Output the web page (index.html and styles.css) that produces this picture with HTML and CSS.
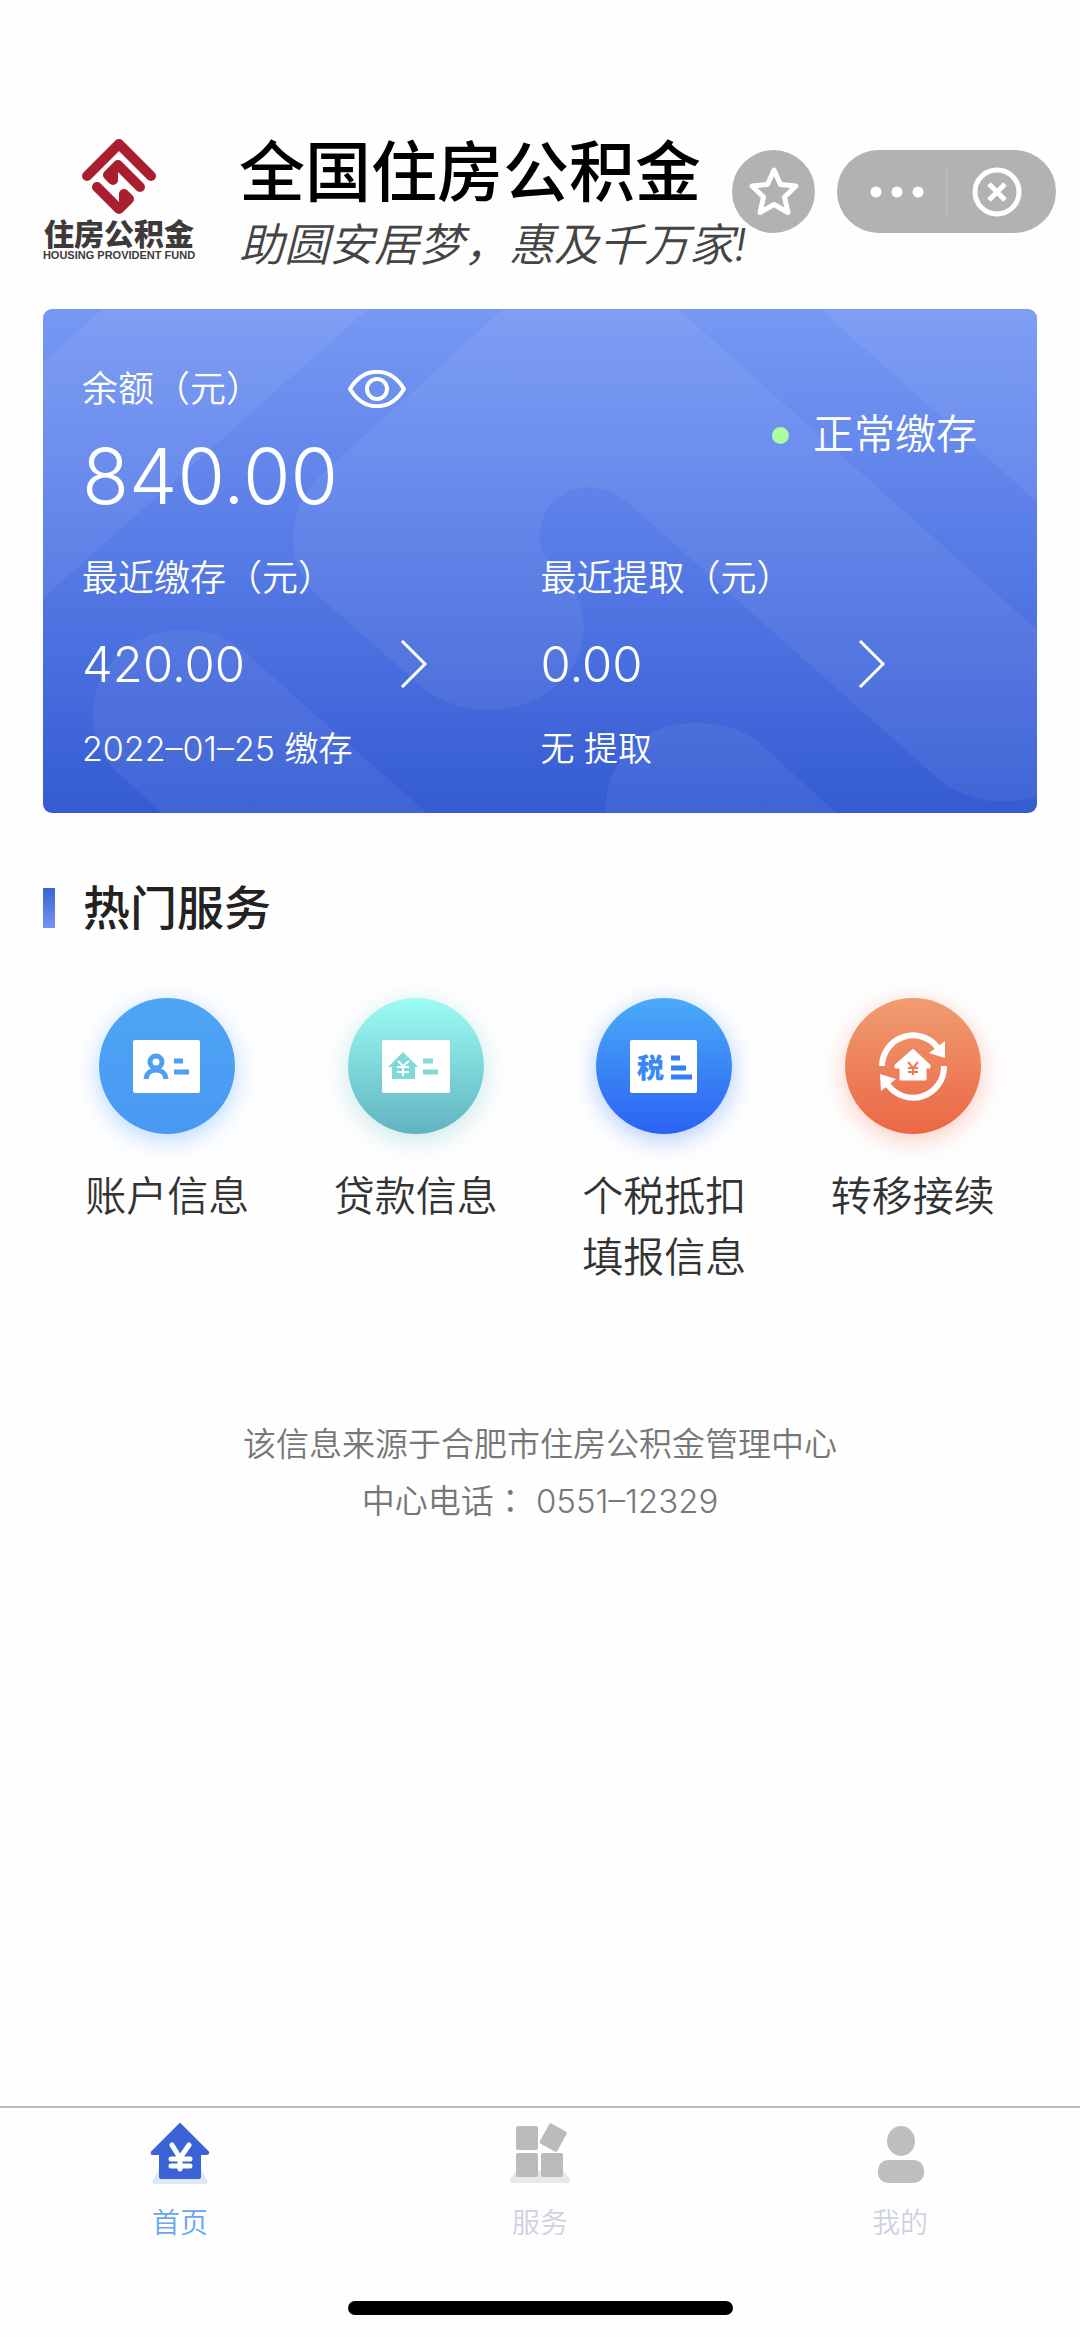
FILE: index.html
```
<!DOCTYPE html>
<html lang="zh-CN">
<head>
    <meta charset="UTF-8">
    <meta name="viewport" content="width=device-width, initial-scale=1.0">
    <title>全国住房公积金</title>
    <link rel="stylesheet" href="styles.css">
</head>
<body>
    <header class="header">
        <div class="logo">
            <svg class="logo-mark" viewBox="0 0 76 78" fill="none" stroke="#a91f30" stroke-width="10" stroke-linecap="round" stroke-linejoin="round">
                <path d="M6 38 L38 6 L70 38"/>
                <path d="M59 49 L37 27 L27 37 L32 42 V35"/>
                <path d="M16 49 L38 71 L48 61 L43 56 V63"/>
            </svg>
            <span class="logo-name">住房公积金</span>
            <span class="logo-en">HOUSING PROVIDENT FUND</span>
        </div>
        <div class="brand">
            <h1 class="brand-title">全国住房公积金</h1>
            <p class="brand-slogan">助圆安居梦，惠及千万家!</p>
        </div>
        <div class="capsule-area">
            <button class="star-btn" type="button" aria-label="收藏">
                <svg viewBox="0 0 52 52" width="52" height="52" fill="none" stroke="#fff" stroke-width="5" stroke-linejoin="round">
                    <path d="M26 4 L32.500 18.500 L48 20 L36.500 31 L40 46.500 L26 38.500 L12 46.500 L15.500 31 L4 20 L19.500 18.500 Z"/>
                </svg>
            </button>
            <div class="capsule">
                <button class="capsule-btn" type="button" aria-label="更多">
                    <svg viewBox="0 0 54 12" width="54" height="12" fill="#fff">
                        <circle cx="6" cy="6" r="5.500"/>
                        <circle cx="27" cy="6" r="5.500"/>
                        <circle cx="48" cy="6" r="5.500"/>
                    </svg>
                </button>
                <span class="capsule-line"></span>
                <button class="capsule-btn" type="button" aria-label="关闭">
                    <svg viewBox="0 0 50 50" width="50" height="50" fill="none" stroke="#fff" stroke-width="5">
                        <circle cx="25" cy="25" r="22"/>
                        <path d="M17 17 L33 33 M33 17 L17 33"/>
                    </svg>
                </button>
            </div>
        </div>
    </header>

    <main class="main">
        <section class="card">
            <svg class="card-bg" viewBox="0 0 994 504" preserveAspectRatio="none" fill="#fff" fill-opacity="0.06">
                <path d="M60 0 H325 L0 289 V54 Z"/>
                <path d="M460 0 H635 L994 321 V487 Q945 503 900 474 L584 193 C560 174 531 174 511 192 C495 208 492 232 503 249 C548 281 552 338 519 372 C478 411 411 411 370 370 L274 286 C242 256 242 204 274 170 Z"/>
                <path d="M777 0 H994 V193 Z"/>
                <path d="M119 504 L76 465 C40 431 42 377 76 345 C108 315 160 313 196 338 L384 504 Z"/>
                <path d="M562 504 C562 450 602 414 650 414 C676 414 698 419 715 433 L794 504 Z"/>
            </svg>
            <div class="card-top">
                <div class="balance">
                    <div class="balance-label">
                        <span class="label">余额（元）</span>
                        <button class="eye-btn" type="button" aria-label="显示余额">
                            <svg viewBox="0 0 60 38" width="60" height="38" fill="none" stroke="#fff" stroke-width="4">
                                <path d="M3 19 C17 -4 43 -4 57 19 C43 42 17 42 3 19 Z" stroke-linejoin="round"/>
                                <circle cx="30" cy="19" r="10"/>
                            </svg>
                        </button>
                    </div>
                    <strong class="balance-num">840.00</strong>
                </div>
                <div class="status"><i class="status-dot"></i>正常缴存</div>
            </div>
            <div class="card-cols">
                <a class="record" href="#">
                    <span class="label">最近缴存（元）</span>
                    <span class="record-row">
                        <span class="record-num">420.00</span>
                        <svg class="arrow" viewBox="0 0 28 48" width="28" height="48"><path d="M2 1 L25 24 L2 47"/></svg>
                    </span>
                    <span class="record-date">2022–01–25 缴存</span>
                </a>
                <a class="record" href="#">
                    <span class="label">最近提取（元）</span>
                    <span class="record-row">
                        <span class="record-num">0.00</span>
                        <svg class="arrow" viewBox="0 0 28 48" width="28" height="48"><path d="M2 1 L25 24 L2 47"/></svg>
                    </span>
                    <span class="record-date">无 提取</span>
                </a>
            </div>
        </section>

        <h2 class="section-title">热门服务</h2>
        <nav class="services">
            <a class="service" href="#">
                <span class="service-icon icon-account">
                    <svg viewBox="0 0 136 136" fill="none">
                        <rect x="34" y="42" width="67" height="53" rx="2" fill="#fff"/>
                        <g stroke="#4c9ff3" stroke-width="5">
                            <circle cx="57" cy="64" r="6"/>
                            <path d="M47 81 C48 69 66 69 67 81"/>
                            <path d="M75 63 H84 M75 74 H90"/>
                        </g>
                    </svg>
                </span>
                <span class="service-name">账户信息</span>
            </a>
            <a class="service" href="#">
                <span class="service-icon icon-loan">
                    <svg viewBox="0 0 136 136" fill="none">
                        <rect x="34" y="42" width="68" height="53" rx="2" fill="#fff"/>
                        <path d="M55 54 L70 69 H67 V81 H44 V69 H40 Z" fill="#80dada"/>
                        <path d="M50 63 L55 68 L61 63 M55 68 V78 M49 69 H61 M49 74 H61" stroke="#fff" stroke-width="2"/>
                        <path d="M75 63 H85 M75 74 H90" stroke="#80dada" stroke-width="5"/>
                    </svg>
                </span>
                <span class="service-name">贷款信息</span>
            </a>
            <a class="service" href="#">
                <span class="service-icon icon-tax">
                    <svg viewBox="0 0 136 136" fill="none">
                        <rect x="34" y="42" width="67" height="53" rx="2" fill="#fff"/>
                        <text class="tax-char" x="41" y="80">税</text>
                        <path d="M75 60 H84 M75 70 H90 M75 79 H96" stroke="#347ff3" stroke-width="5"/>
                    </svg>
                </span>
                <span class="service-name">个税抵扣<br>填报信息</span>
            </a>
            <a class="service" href="#">
                <span class="service-icon icon-transfer">
                    <svg viewBox="0 0 136 136" fill="none">
                        <path d="M37 68 A31 31 0 0 1 93 50 M99 68 A31 31 0 0 1 43 87" stroke="#fff" stroke-width="6"/>
                        <path d="M100 43 V60 L84 55 Z M35 76 L51 81 L36 93 Z" fill="#fff"/>
                        <path d="M68 51 L85 67 V70 H81 V82 H55 V70 H50 V67 Z" fill="#fff" stroke="#fff" stroke-linejoin="round"/>
                        <path d="M63 64 L68 70 L73 64 M68 69 V77 M63 70 H73 M63 74 H73" stroke="#ed7a53" stroke-width="2"/>
                    </svg>
                </span>
                <span class="service-name">转移接续</span>
            </a>
        </nav>

        <p class="source">该信息来源于合肥市住房公积金管理中心<br>中心电话<span class="colon" lang="zh-TW">：</span> 0551–12329</p>
    </main>

    <footer class="footer">
        <nav class="tabbar">
            <a class="tab active" href="#">
                <svg viewBox="0 0 64 64" width="64" height="64" fill="none">
                    <path d="M12 46 H52 L59 59 Q61 63 57 63 H7 Q3 63 5 59 Z" fill="#dfe8fb"/>
                    <path d="M32 3 L60 31 Q61 33 58 33 H52 V56 Q52 57 51 57 H13 Q12 57 12 56 V33 H5 Q3 33 4 31 Z" fill="#3c63d6" stroke="#3c63d6" stroke-width="2" stroke-linejoin="round"/>
                    <path d="M24 24 L32 37 L41 24 M32 37 V48 M23 38 H42 M23 45 H42" stroke="#fff" stroke-width="5" stroke-linecap="round"/>
                </svg>
                <span>首页</span>
            </a>
            <a class="tab" href="#">
                <svg viewBox="0 0 64 64" width="64" height="64" fill="#bbb">
                    <path d="M8 50 H55 L61 57 Q64 62 60 62 H4 Q0 62 3 57 Z" fill="#e8e8ea"/>
                    <rect x="8" y="5" width="22" height="24" rx="2"/>
                    <rect x="8" y="32" width="22" height="24" rx="2"/>
                    <rect x="33" y="32" width="22" height="24" rx="2"/>
                    <rect x="35" y="5" width="20" height="23" rx="2" transform="rotate(29 45 17)"/>
                </svg>
                <span>服务</span>
            </a>
            <a class="tab" href="#">
                <svg viewBox="0 0 64 64" width="64" height="64" fill="#bebebe">
                    <ellipse cx="33" cy="20" rx="14" ry="15"/>
                    <rect x="10" y="39" width="46" height="23" rx="10"/>
                </svg>
                <span>我的</span>
            </a>
        </nav>
        <div class="home-bar"></div>
    </footer>
</body>
</html>
```
FILE: styles.css
```
* {
    box-sizing: border-box;
}

body {
    margin: 0;
    min-height: 100vh;
    display: flex;
    flex-direction: column;
    font-family: Inter, "Noto Sans CJK SC", sans-serif;
    font-weight: 350;
    background-color: #fefefe;
    color: #333;
}

a {
    color: inherit;
    text-decoration: none;
}

button {
    border: 0;
    padding: 0;
    background: none;
    display: flex;
    align-items: center;
    justify-content: center;
    cursor: pointer;
}

h1, h2, p {
    margin: 0;
}

.header {
    position: relative;
    display: flex;
    gap: 44px;
    padding: 132px 43px 0;
}

.logo {
    width: 152px;
    padding-top: 6px;
    display: flex;
    flex-direction: column;
    align-items: center;
    white-space: nowrap;
}

.logo-mark {
    width: 76px;
    height: 78px;
}

.logo-name {
    margin-top: 4px;
    font-size: 30px;
    line-height: 28px;
    font-weight: 900;
    color: #3e3a39;
}

.logo-en {
    font-family: "Liberation Sans", sans-serif;
    font-size: 11px;
    line-height: 14px;
    font-weight: bold;
    color: #3e3a39;
}

.brand-title {
    font-size: 66px;
    line-height: 80px;
    font-weight: 500;
    color: #000;
    white-space: nowrap;
}

.brand-slogan {
    font-size: 45px;
    line-height: 66px;
    font-style: italic;
    color: #444;
    white-space: nowrap;
}

/* floats over the header */
.capsule-area {
    position: absolute;
    top: 150px;
    right: 24px;
    display: flex;
    gap: 22px;
}

.star-btn {
    width: 83px;
    height: 83px;
    border-radius: 50%;
    background-color: #b2b2b2;
}

.capsule {
    width: 219px;
    height: 83px;
    border-radius: 42px;
    background-color: #b2b2b2;
    display: flex;
    align-items: center;
    padding: 0 10px;
}

.capsule-btn {
    flex: 1;
    height: 83px;
}

.capsule-line {
    width: 1px;
    height: 50px;
    background-color: #bfbfbf;
}

.main {
    flex: 1;
    padding: 31px 43px 0;
}

.card {
    position: relative;
    overflow: hidden;
    padding: 53px 0 38px 39px;
    border-radius: 9px;
    background: linear-gradient(#7799f4, #5b7fe8 42%, #355bd3);
    color: #fff;
}

.card-bg {
    position: absolute;
    left: 0;
    top: 0;
    width: 100%;
    height: 100%;
}

.card-top {
    position: relative;
    display: flex;
    justify-content: space-between;
    padding-right: 60px;
}

.balance-label {
    display: flex;
    align-items: center;
    gap: 85px;
}

.label {
    font-size: 36px;
    line-height: 54px;
}

.balance-num {
    display: block;
    font-size: 77px;
    line-height: 120px;
    font-weight: 300;
}

.status {
    display: flex;
    align-items: center;
    height: 60px;
    margin-top: 39px;
    font-size: 41px;
}

.status-dot {
    width: 17px;
    height: 17px;
    margin: 8px 24px 0 0;
    border-radius: 50%;
    background-color: #a9fca2;
}

.card-cols {
    position: relative;
    display: flex;
    margin-top: 15px;
}

.record {
    width: 48%;
    display: flex;
    flex-direction: column;
}

.record-row {
    width: 346px;
    height: 118px;
    display: flex;
    align-items: center;
    justify-content: space-between;
}

.record-num {
    font-size: 49px;
    font-weight: 300;
}

.arrow {
    fill: none;
    stroke: #fff;
    stroke-width: 3;
}

.record-date {
    font-size: 34px;
    line-height: 52px;
}

.section-title {
    display: flex;
    align-items: center;
    gap: 28px;
    margin-top: 62px;
    font-size: 47px;
    line-height: 66px;
    font-weight: 500;
    color: #222;
}

.section-title::before {
    content: "";
    width: 12px;
    height: 40px;
    background: linear-gradient(#3a62d6, #7395f2);
}

.services {
    display: flex;
    margin-top: 57px;
}

.service {
    flex: 1;
    display: flex;
    flex-direction: column;
    align-items: center;
    gap: 32px;
}

.service-icon {
    width: 136px;
    height: 136px;
    border-radius: 50%;
}

.service-icon svg {
    display: block;
    width: 100%;
    height: 100%;
}

.icon-account {
    background: linear-gradient(#4ea5f5, #4a98f2);
    box-shadow: 0 6px 24px rgba(74, 160, 255, 0.4);
}

.icon-loan {
    background: linear-gradient(#9cfcf2, #60b3c1);
    box-shadow: 0 6px 24px rgba(96, 190, 190, 0.35);
}

.icon-tax {
    background: linear-gradient(#4aabf8, #2b62f3);
    box-shadow: 0 6px 24px rgba(60, 130, 250, 0.4);
}

.icon-transfer {
    background: linear-gradient(#f09c71, #eb6745);
    box-shadow: 0 6px 24px rgba(240, 110, 75, 0.35);
}

.tax-char {
    font-family: "Noto Sans CJK SC", sans-serif;
    font-size: 27px;
    font-weight: 900;
    fill: #3a88f4;
}

.service-name {
    font-size: 41px;
    line-height: 61px;
    text-align: center;
}

.source {
    margin-top: 129px;
    font-size: 33px;
    line-height: 55px;
    text-align: center;
    color: #777;
}

.colon {
    font-family: "Noto Sans CJK TC", sans-serif;
}

.footer {
    height: 231px;
    border-top: 2px solid #bbb;
    display: flex;
    flex-direction: column;
    align-items: center;
    justify-content: space-between;
    padding-bottom: 22px;
}

.tabbar {
    width: 100%;
    display: flex;
}

.tab {
    flex: 1;
    display: flex;
    flex-direction: column;
    align-items: center;
    gap: 18px;
    padding-top: 13px;
    font-size: 28px;
    line-height: 40px;
    color: #cfd2e0;
}

.tab.active {
    color: #6aa5f2;
}

.home-bar {
    width: 385px;
    height: 14px;
    border-radius: 7px;
    background-color: #000;
}
```
